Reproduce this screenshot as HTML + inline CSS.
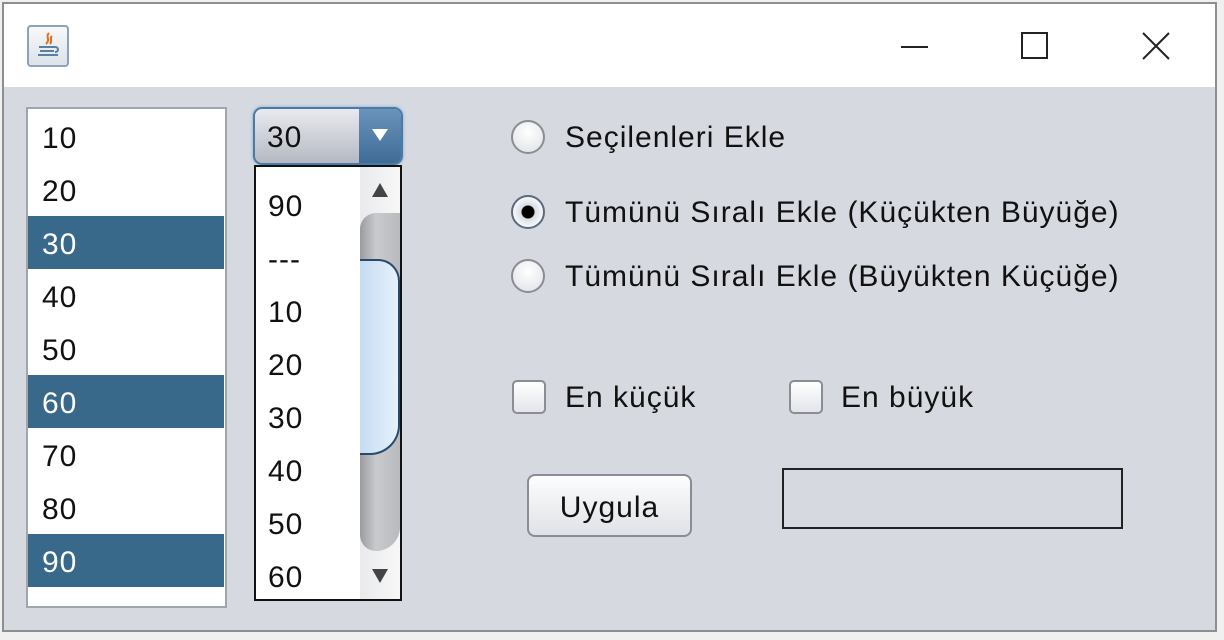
<!DOCTYPE html><html><head><style>
*{margin:0;padding:0;box-sizing:border-box}
body{width:1224px;height:640px;background:#f0f0f0;position:relative;overflow:hidden;font-family:"Liberation Sans",sans-serif;font-size:30px;letter-spacing:1px;color:#111}
.abs{position:absolute}
#win{left:2px;top:2px;width:1215px;height:630px;border:2px solid #8e8e8e;background:#d6d9e0}
#title{left:0;top:0;width:1211px;height:83px;background:#fff}
.row{position:absolute;left:0;width:196px;height:53px;line-height:57px;padding-left:14px}
.sel{background:#39698a;color:#fff}
.pi{position:absolute;left:12px;height:53px;line-height:55px}
.radio{position:absolute;width:34px;height:34px;border-radius:50%;border:2px solid #8a8d93;background:radial-gradient(circle at 50% 35%,#fff,#dde0e5)}
.cb{position:absolute;width:34px;height:34px;border-radius:5px;border:2px solid #8a8d93;background:linear-gradient(#fff,#e3e5ea)}
.lbl{position:absolute;line-height:36px}
</style></head><body>
<div id="win" class="abs">
<div id="title" class="abs">
 <div class="abs" style="left:23px;top:21px;width:42px;height:42px;border:2px solid #8ea2b8;border-radius:4px;background:linear-gradient(#f8f8f8,#dce3ea)">
  <svg width="38" height="38" viewBox="0 0 38 38"><path d="M20 6c-4 4 2 6-3 11M23 9c-3 3 1 4-2 8" stroke="#e07020" stroke-width="2" fill="none"/><path d="M10 20h16M11 24h14M9 28h20" stroke="#5a7fa0" stroke-width="2"/><path d="M26 20c4 0 4 5 0 5" stroke="#5a7fa0" stroke-width="2" fill="none"/></svg>
 </div>
 <div class="abs" style="left:897px;top:42px;width:27px;height:2px;background:#222"></div>
 <div class="abs" style="left:1017px;top:28px;width:27px;height:27px;border:2px solid #222"></div>
 <svg class="abs" style="left:1137px;top:27px" width="30" height="30"><path d="M2 2L28 28M28 2L2 28" stroke="#222" stroke-width="2"/></svg>
</div>
</div>
<div class="abs" style="left:26px;top:107px;width:201px;height:501px;border:2px solid #a0a6ae;background:#fff">
 <div class="row" style="top:1px">10</div><div class="row" style="top:54px">20</div>
 <div class="row sel" style="top:107px">30</div><div class="row" style="top:160px">40</div>
 <div class="row" style="top:213px">50</div><div class="row sel" style="top:266px">60</div>
 <div class="row" style="top:319px">70</div><div class="row" style="top:372px">80</div>
 <div class="row sel" style="top:425px">90</div>
</div>
<div class="abs" style="left:253px;top:107px;width:150px;height:58px;border:2px solid #4a7aa8;border-radius:9px;background:linear-gradient(#e8eaee,#b4b9c2);box-shadow:0 0 3px #7fa8d0;overflow:hidden">
 <div class="abs" style="left:12px;top:0;line-height:58px">30</div>
 <div class="abs" style="left:104px;top:0;width:44px;height:54px;background:linear-gradient(#6a93ba,#3f6c96)">
  <svg class="abs" style="left:11px;top:18px" width="20" height="16"><path d="M2 2H18L10 14Z" fill="#fff"/></svg>
 </div>
</div>
<div class="abs" style="left:254px;top:165px;width:148px;height:436px;border:2px solid #111;background:#fff;overflow:hidden">
 <div class="pi" style="top:12px">90</div><div class="pi" style="top:65px">---</div>
 <div class="pi" style="top:118px">10</div><div class="pi" style="top:171px">20</div>
 <div class="pi" style="top:224px">30</div><div class="pi" style="top:277px">40</div>
 <div class="pi" style="top:330px">50</div><div class="pi" style="top:383px">60</div>
 <div class="abs" style="left:104px;top:0;width:40px;height:432px;background:linear-gradient(90deg,#e9eaec,#f7f7f8)">
  <svg class="abs" style="left:10px;top:14px" width="20" height="18"><path d="M10 2L18 16H2Z" fill="#444"/></svg>
  <div class="abs" style="left:0;top:46px;width:40px;height:338px;background:linear-gradient(90deg,#9a9ca0,#c8cacd 40%,#b8babd);border-radius:20px 0 30px 20px"></div>
  <div class="abs" style="left:0;top:92px;width:40px;height:196px;border:2px solid #2a4a6a;border-left:none;border-radius:0 22px 30px 0;background:linear-gradient(90deg,#c6dcf2,#e6f1fc)"></div>
  <svg class="abs" style="left:10px;top:400px" width="20" height="18"><path d="M2 2H18L10 16Z" fill="#444"/></svg>
 </div>
</div>
<div class="radio" style="left:511px;top:120px"></div><div class="lbl" style="left:565px;top:120px">Seçilenleri Ekle</div>
<div class="radio" style="left:511px;top:195px;border-color:#5a6a80;background:radial-gradient(circle,#000 0 6px,#d8dde4 7px,#f4f6f8 14px)"></div><div class="lbl" style="left:565px;top:195px">Tümünü Sıralı Ekle (Küçükten Büyüğe)</div>
<div class="radio" style="left:511px;top:259px"></div><div class="lbl" style="left:565px;top:259px">Tümünü Sıralı Ekle (Büyükten Küçüğe)</div>
<div class="cb" style="left:512px;top:380px"></div><div class="lbl" style="left:565px;top:380px">En küçük</div>
<div class="cb" style="left:789px;top:380px"></div><div class="lbl" style="left:841px;top:380px">En büyük</div>
<div class="abs" style="left:527px;top:474px;width:165px;height:63px;border:2px solid #8a8d93;border-radius:8px;background:linear-gradient(#fdfdfd,#dfe2e7);text-align:center;line-height:63px">Uygula</div>
<div class="abs" style="left:782px;top:468px;width:341px;height:61px;border:2px solid #222;background:#d6d9e0"></div>
</body></html>
